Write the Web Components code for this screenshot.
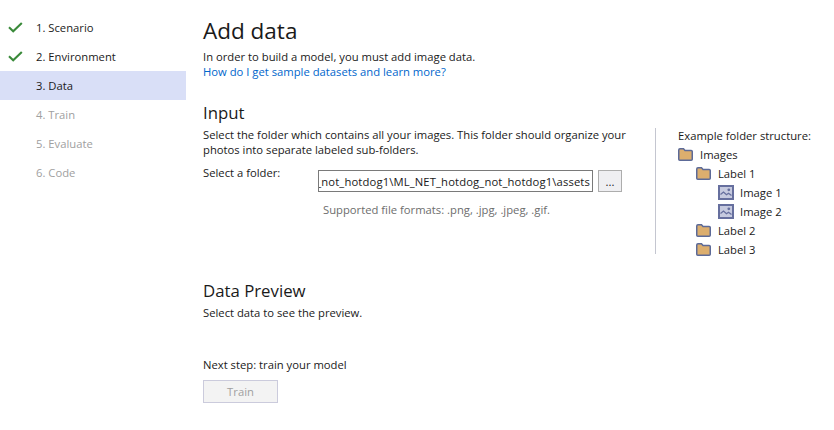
<!DOCTYPE html>
<html>
<head>
<meta charset="utf-8">
<style>
  html, body { margin: 0; padding: 0; background: #fff; }
  body { font-family: "Open Sans", "Liberation Sans", sans-serif; font-size: 11.25px; color: #1a1a1a; width: 834px; height: 430px; overflow: hidden; }
</style>
</head>
<body>
<wizard-page>
  <step-nav slot="nav">
    <nav-step state="done">1. Scenario</nav-step>
    <nav-step state="done">2. Environment</nav-step>
    <nav-step state="active">3. Data</nav-step>
    <nav-step>4. Train</nav-step>
    <nav-step>5. Evaluate</nav-step>
    <nav-step>6. Code</nav-step>
  </step-nav>
  <data-panel slot="main"></data-panel>
</wizard-page>

<script>
const pageTpl = document.createElement('template');
pageTpl.innerHTML = `
<style>
  :host { display: flex; height: 430px; }
  .nav { flex: 0 0 186px; padding-top: 13px; }
  .main { flex: 1; padding-left: 17px; min-width: 0; }
</style>
<div class="nav"><slot name="nav"></slot></div>
<div class="main"><slot name="main"></slot></div>`;

class WizardPage extends HTMLElement {
  constructor() {
    super();
    this.attachShadow({mode: 'open'}).appendChild(pageTpl.content.cloneNode(true));
  }
}

class StepNav extends HTMLElement {
  constructor() {
    super();
    this.attachShadow({mode: 'open'}).innerHTML = `<style>:host { display: block; }</style><slot></slot>`;
  }
}

class NavStep extends HTMLElement {
  constructor() {
    super();
    const state = this.getAttribute('state');
    const check = state === 'done'
      ? `<svg width="15" height="11" viewBox="0 0 15 11"><path d="M1 5.2 L5.2 9.2 L13.8 1" fill="none" stroke="#3a8a3a" stroke-width="2.1"/></svg>`
      : '';
    this.attachShadow({mode: 'open'}).innerHTML = `
      <style>
        :host { display: flex; align-items: center; height: 29px; color: #a0a0a0; }
        :host([state="done"]) { color: #1a1a1a; }
        :host([state="active"]) { color: #1a1a1a; background: #d9dff7; }
        .mark { flex: 0 0 36px; padding-left: 8px; box-sizing: border-box; display: flex; align-items: center; }
      </style>
      <span class="mark">${check}</span><slot></slot>`;
  }
}

class FolderTree extends HTMLElement {
  constructor() {
    super();
    const folder = `<svg width="15" height="13" viewBox="0 0 15 13"><path d="M.75 2 Q.75 .75 2 .75 H5.5 L7 2.5 H13.2 Q14.25 2.5 14.25 3.5 V11.2 Q14.25 12.25 13.2 12.25 H1.8 Q.75 12.25 .75 11.2 Z" fill="#dcae6e" stroke="#5c6a98" stroke-width="1.5"/></svg>`;
    const image = `<svg width="16" height="15" viewBox="0 0 16 15"><rect x="1" y="1" width="14" height="13" fill="#c6cadf" stroke="#666f9e" stroke-width="2"/><circle cx="10.8" cy="4.8" r="1.4" fill="#666f9e"/><path d="M2.5 9.5 L5.5 7 L8.5 9.7 L10.5 8.3 L13.5 10.5" fill="none" stroke="#666f9e" stroke-width="1.3"/></svg>`;
    const row = (depth, icon, text) => `<div class="row d${depth}">${icon}<span>${text}</span></div>`;
    this.attachShadow({mode: 'open'}).innerHTML = `
      <style>
        :host { display: block; }
        .row { display: flex; align-items: center; height: 19px; gap: 7px; }
        .d1 { padding-left: 18px; }
        .d2 { padding-left: 40px; gap: 6px; }
      </style>
      ${row(0, folder, 'Images')}
      ${row(1, folder, 'Label 1')}
      ${row(2, image, 'Image 1')}
      ${row(2, image, 'Image 2')}
      ${row(1, folder, 'Label 2')}
      ${row(1, folder, 'Label 3')}`;
  }
}

class DataPanel extends HTMLElement {
  constructor() {
    super();
    this.attachShadow({mode: 'open'}).innerHTML = `
      <style>
        :host { display: block; padding-top: 16px; }
        h1, h2 { margin: 0; font-weight: 400; color: #1a1a1a; }
        h1 { font-size: 22.5px; line-height: 30px; }
        h2 { font-size: 16.8px; line-height: 24px; }
        p { margin: 0; line-height: 15px; }
        a { color: #0066cc; text-decoration: none; display: block; line-height: 15px; }
        .intro { margin-top: 3px; }
        .input { margin-top: 22px; display: flex; }
        .left { flex: 0 0 452px; }
        .desc { margin-top: 2px; line-height: 15px; }
        .folder { display: flex; margin-top: 7px; align-items: flex-start; }
        .folder label { flex: 0 0 115px; line-height: 15px; padding-top: 1px; }
        .path { width: 275px; height: 22px; margin-top: 6px; box-sizing: border-box; border: 1px solid #7a7a7a; display: flex; align-items: center; justify-content: flex-end; overflow: hidden; white-space: nowrap; padding-right: 2px; letter-spacing: .13px; }
        .browse { width: 24px; height: 22px; margin: 6px 0 0 5px; box-sizing: border-box; border: 1px solid #adadad; background: #efeff2; font: inherit; padding: 0; color: #1a1a1a; }
        .formats { margin: 10px 0 0 120px; color: #6d6d6d; line-height: 15px; }
        .example { border-left: 1px solid #c4c6d0; padding-left: 22px; height: 126px; margin-top: 27px; }
        .example .cap { line-height: 15px; margin-bottom: 2px; white-space: nowrap; }
        .preview { margin-top: 25px; }
        .preview p { margin-top: 2px; }
        .next { margin-top: 37px; line-height: 15px; }
        .train { display: block; margin-top: 8px; width: 75px; height: 23px; box-sizing: border-box; border: 1px solid #cbcbdc; background: #f3f3f3; color: #a0a0a0; font: inherit; padding: 0; }
      </style>
      <h1>Add data</h1>
      <div class="intro">
        <p>In order to build a model, you must add image data.</p>
        <a href="#">How do I get sample datasets and learn more?</a>
      </div>
      <div class="input">
        <div class="left">
          <h2>Input</h2>
          <p class="desc">Select the folder which contains all your images. This folder should organize your<br>photos into separate labeled sub-folders.</p>
          <div class="folder">
            <label>Select a folder:</label>
            <div class="path"><span>_not_hotdog1\\ML_NET_hotdog_not_hotdog1\\assets</span></div>
            <button class="browse">...</button>
          </div>
          <p class="formats">Supported file formats: .png, .jpg, .jpeg, .gif.</p>
        </div>
        <div class="example">
          <div class="cap">Example folder structure:</div>
          <folder-tree></folder-tree>
        </div>
      </div>
      <div class="preview">
        <h2>Data Preview</h2>
        <p>Select data to see the preview.</p>
      </div>
      <p class="next">Next step: train your model</p>
      <button class="train">Train</button>`;
  }
}

customElements.define('wizard-page', WizardPage);
customElements.define('step-nav', StepNav);
customElements.define('nav-step', NavStep);
customElements.define('folder-tree', FolderTree);
customElements.define('data-panel', DataPanel);
</script>
</body>
</html>
